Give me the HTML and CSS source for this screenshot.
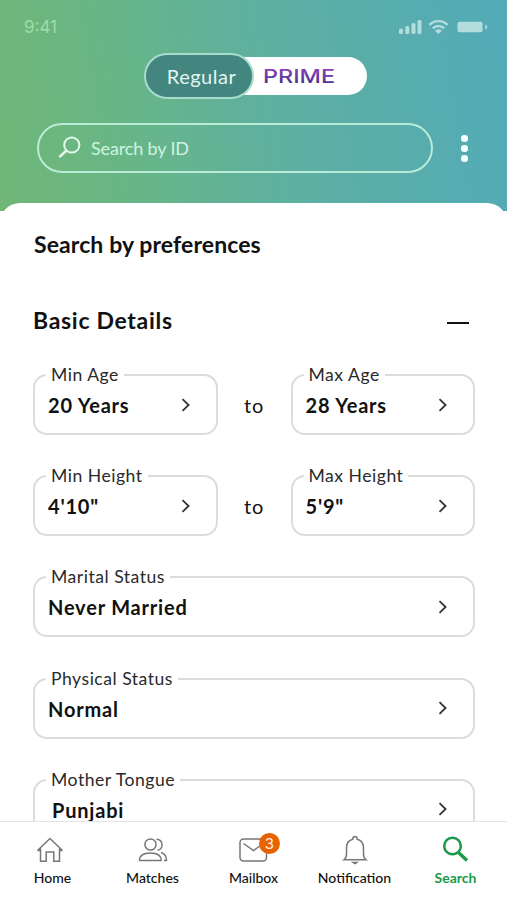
FILE: index.html
```
<!DOCTYPE html>
<html lang="en">
<head>
<meta charset="UTF-8" />
<meta name="viewport" content="width=device-width, initial-scale=1.0" />
<title>Search by preferences</title>
<link rel="stylesheet" href="styles.css">
</head>
<body>
<!-- shared chevron -->
<svg width="0" height="0" class="defs">
  <symbol id="chevron" viewBox="0 0 10 14">
    <path d="M1.5 1.2 7.6 7l-6.1 5.8" fill="none" stroke="#33333d" stroke-width="1.8"/>
  </symbol>
</svg>

<header class="top">
  <div class="status">
    <span class="time">9:41</span>
    <svg class="status-icons" width="90" height="16" viewBox="0 0 90 16" fill="#b3dcdd">
      <rect x="0" y="9.5" width="4" height="5.5" rx="1.5"/>
      <rect x="6.3" y="7" width="4" height="8" rx="1.5"/>
      <rect x="12.5" y="4" width="4" height="11" rx="1.5"/>
      <rect x="18.5" y="1" width="4" height="14" rx="1.5"/>
      <g fill="none" stroke="#b3dcdd" stroke-width="2.4">
        <path d="M30.400 5.800a13 13 0 0 1 18.200 0"/>
        <path d="M33.700 9.400a8.300 8.300 0 0 1 11.600 0"/>
      </g>
      <path d="M36 11.700a5 5 0 0 1 7 0l-3.500 3.300z"/>
      <rect x="58.5" y="2.8" width="25" height="10.4" rx="2"/>
      <path d="M86.300 5.500c2.600.8 2.600 4 0 5z"/>
    </svg>
  </div>

  <div class="toggle">
    <span class="toggle-on">Regular</span>
    <span class="toggle-off">
      <svg width="72" height="20" viewBox="0 0 72 20">
        <defs>
          <linearGradient id="prime" x1="0" y1="0" x2="0" y2="1">
            <stop offset="0.2" stop-color="#8a3fb8"/>
            <stop offset="0.85" stop-color="#43338f"/>
          </linearGradient>
        </defs>
        <text x="0" y="17" textLength="72" lengthAdjust="spacingAndGlyphs" fill="url(#prime)">PRIME</text>
      </svg>
    </span>
  </div>

  <div class="search-row">
    <div class="search-box">
      <svg width="23" height="23" viewBox="0 0 23 23" fill="none" stroke="#e4f8ec" stroke-width="2">
        <circle cx="13.8" cy="9" r="7.6"/>
        <path d="M8.500 14.500 1.300 21.200" stroke-width="2.5"/>
      </svg>
      <span>Search by ID</span>
    </div>
    <div class="dots"><i></i><i></i><i></i></div>
  </div>
</header>

<main class="sheet">
  <h1>Search by preferences</h1>
  <div class="section-head">
    <h2>Basic Details</h2>
    <span class="minus"></span>
  </div>

  <div class="row">
    <fieldset class="field">
      <legend>Min Age</legend>
      <div class="value">20 Years <svg><use href="#chevron"/></svg></div>
    </fieldset>
    <span class="to">to</span>
    <fieldset class="field">
      <legend>Max Age</legend>
      <div class="value">28 Years <svg><use href="#chevron"/></svg></div>
    </fieldset>
  </div>

  <div class="row">
    <fieldset class="field">
      <legend>Min Height</legend>
      <div class="value">4'10" <svg><use href="#chevron"/></svg></div>
    </fieldset>
    <span class="to">to</span>
    <fieldset class="field">
      <legend>Max Height</legend>
      <div class="value">5'9" <svg><use href="#chevron"/></svg></div>
    </fieldset>
  </div>

  <div class="row">
    <fieldset class="field">
      <legend>Marital Status</legend>
      <div class="value">Never Married <svg><use href="#chevron"/></svg></div>
    </fieldset>
  </div>

  <div class="row">
    <fieldset class="field">
      <legend>Physical Status</legend>
      <div class="value">Normal <svg><use href="#chevron"/></svg></div>
    </fieldset>
  </div>

  <div class="row">
    <fieldset class="field">
      <legend>Mother Tongue</legend>
      <div class="value indent">Punjabi <svg><use href="#chevron"/></svg></div>
    </fieldset>
  </div>
</main>

<nav class="tabs">
  <a class="tab home">
    <svg width="32" height="32" viewBox="0 0 32 32">
      <path d="M3.500 16.500 16 4.500l12.500 12M3.500 16.500h3M28.500 16.500h-3M6.500 14.500v12.800h5.700v-9.300h7.600v9.300h5.700V14.500"/>
    </svg>
    <span>Home</span>
  </a>
  <a class="tab">
    <svg width="32" height="32" viewBox="0 0 32 32">
      <circle cx="13.5" cy="10.5" r="5.6"/>
      <path d="M2.500 26.500c0-5.200 4-7.500 11-7.500s10.700 2.300 10.700 7.500z"/>
      <path d="M19.500 5.300c6.800.2 7.500 9.700 1 11M24 18.500c4 1.200 5.500 4 5.500 8h-2.500"/>
    </svg>
    <span>Matches</span>
  </a>
  <a class="tab">
    <svg width="32" height="32" viewBox="0 0 32 32">
      <rect x="2" y="5" width="26.5" height="22" rx="3.5"/>
      <path d="m5.500 9.500 10 7 10-7"/>
    </svg>
    <b class="badge">3</b>
    <span>Mailbox</span>
  </a>
  <a class="tab">
    <svg width="32" height="32" viewBox="0 0 32 32">
      <path d="M5 25.800c1.800-1.300 2.500-2.500 2.500-5.800v-6c0-4.700 2.300-7.800 6.300-8.800 0-3.600 4.400-3.600 4.400 0 4 1 6.300 4.100 6.300 8.800v6c0 3.300.7 4.500 2.500 5.800z"/>
      <path d="M14.200 28.500h3.600l-1.800 1.200z" fill="#777"/>
    </svg>
    <span>Notification</span>
  </a>
  <a class="tab active">
    <svg width="32" height="32" viewBox="0 0 32 32">
      <circle cx="12.5" cy="12" r="8.3"/>
      <path d="m18.500 18.500 8.500 8" stroke-width="3.4"/>
    </svg>
    <span>Search</span>
  </a>
</nav>
</body>
</html>
```
FILE: styles.css
```
:root {
  --line: #dcdcdc;
  --ink: #111;
  --green: #1a9a48;
}

* { box-sizing: border-box; }

body {
  margin: 0;
  height: 900px;
  overflow: hidden;
  display: flex;
  flex-direction: column;
  font-family: Lato, "Liberation Sans", sans-serif;
  color: var(--ink);
  background: #fff;
}

.defs { position: absolute; }

/* ---------- Header ---------- */
.top {
  flex: none;
  height: 211px;
  background: linear-gradient(80deg, #70b777 0%, #68b686 25%, #5eb0a0 53%, #52aab8 100%);
}
.status {
  display: flex;
  justify-content: space-between;
  align-items: center;
  height: 53px;
  padding: 1px 18px 0 24px;
}
.time {
  font: 17px Inter, sans-serif;
  color: #a1dba7;
}

.toggle {
  display: flex;
  align-items: center;
  margin-left: 144px;
}
.toggle-on {
  z-index: 1;
  width: 110px;
  height: 46px;
  padding-left: 5px;
  border: 2px solid #a9dccb;
  border-radius: 23px;
  background: #43857f;
  color: #e2f5f2;
  font-size: 20px;
  line-height: 43px;
  letter-spacing: 0.5px;
  text-align: center;
}
.toggle-off {
  display: flex;
  align-items: center;
  width: 143px;
  height: 38px;
  margin-left: -30px;
  padding-left: 39px;
  border-radius: 19px;
  background: #fff;
  font: 500 18.5px Inter, sans-serif;
}
.toggle-off svg { overflow: visible; }

.search-row {
  display: flex;
  align-items: center;
  margin: 24px 0 0 37px;
}
.search-box {
  display: flex;
  align-items: center;
  gap: 10px;
  width: 396px;
  height: 50px;
  padding: 0 0 1px 19px;
  border: 2px solid #b9ebd6;
  border-radius: 25px;
  color: #cff3e0;
  font-size: 18px;
}
.search-box span { letter-spacing: -0.15px; }
.dots {
  display: grid;
  gap: 3.5px;
  margin: 1px 0 0 28px;
}
.dots i {
  width: 6.5px;
  height: 6.5px;
  border-radius: 50%;
  background: #f3ffff;
}

/* ---------- Form ---------- */
.sheet {
  flex: 1;
  min-height: 0;
  overflow: hidden;
  margin-top: -8px;
  padding: 0 32px 0 33px;
  background: #fff;
  border-radius: 20px 20px 0 0;
}
h1 {
  margin: 27px 0 0 1px;
  font-size: 23px;
  line-height: 28px;
  font-weight: 700;
  letter-spacing: 0.1px;
}
.section-head {
  display: flex;
  justify-content: space-between;
  align-items: center;
  margin: 47px 6px 29px 0;
}
h2 {
  margin: 0;
  font-size: 23px;
  line-height: 30px;
  letter-spacing: 0.7px;
}
.minus {
  width: 22px;
  height: 2.5px;
  margin-top: 6px;
  background: #111;
}

.row {
  display: flex;
  height: 71px;
  margin-bottom: 30.2px;
}
.field {
  flex: 1;
  min-width: 0;
  margin: 0;
  padding: 0 25px 0 11px;
  border: 2px solid var(--line);
  border-radius: 14px;
}
legend {
  padding: 0 5px;
  font-size: 17.6px;
  line-height: 22px;
  letter-spacing: 0.5px;
  color: #2a2a2a;
}
.value {
  display: flex;
  justify-content: space-between;
  align-items: center;
  margin: 6px 0 0 2px;
  font-size: 20px;
  line-height: 26px;
  font-weight: 700;
  letter-spacing: 0.8px;
}
.value.indent { margin-left: 6px; }
.value svg {
  width: 10px;
  height: 14px;
  margin-top: -1px;
}
.to {
  width: 73px;
  padding-top: 28px;
  text-align: center;
  font-size: 20px;
  line-height: 26px;
  letter-spacing: 0.8px;
}

/* ---------- Bottom tabs ---------- */
.tabs {
  flex: none;
  display: flex;
  height: 79px;
  padding: 0 1px;
  border-top: 1px solid #e4e4e4;
  background: #fff;
}
.tab {
  position: relative;
  flex: 1;
  display: flex;
  flex-direction: column;
  align-items: center;
  padding-top: 12px;
  font-size: 14px;
  line-height: 18px;
  font-weight: 500;
}
.tab svg {
  fill: none;
  stroke: #777;
  stroke-width: 1.5;
}
.tab span { margin-top: 3px; }
.home svg { margin-right: 3px; }
.home span { margin-left: 2px; }
.badge {
  position: absolute;
  top: 11px;
  left: 56px;
  width: 21px;
  height: 21px;
  border-radius: 50%;
  background: #e66300;
  color: #fff3e4;
  font: 15px/21px Inter, sans-serif;
  text-align: center;
}
.active {
  color: var(--green);
  font-weight: 700;
}
.active svg {
  stroke: var(--green);
  stroke-width: 2.5;
}
```
